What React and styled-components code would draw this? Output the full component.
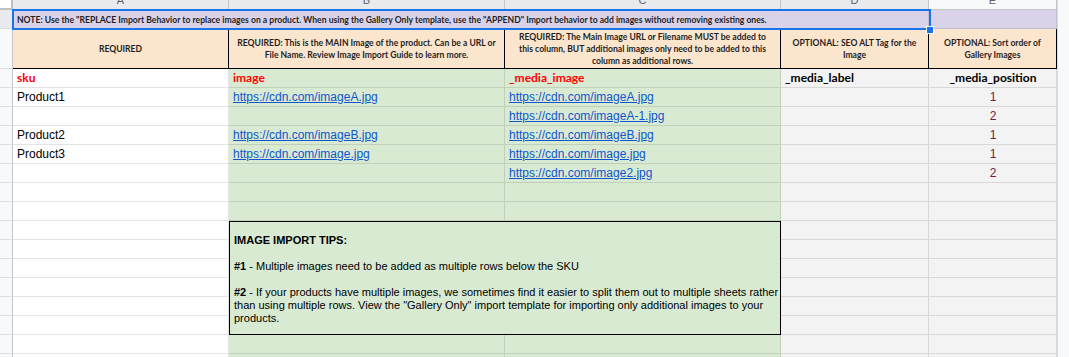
import React from "react"
import styled, { createGlobalStyle } from "styled-components"

const GlobalStyle = createGlobalStyle`
  html, body {
    margin: 0;
    padding: 0;
    background: #ffffff;
    overflow: hidden;
  }
`

const GREEN = "#d9ead3"
const GRAY = "#f3f3f3"
const ORANGE = "#fce5cd"
const LAVENDER = "#d9d2e9"
const GRID = "rgba(0, 0, 0, 0.11)"

const Sheet = styled.div`
  position: relative;
  display: grid;
  grid-template-columns: 13px 216px 276px 276px 148px 128px 12px;
  grid-template-rows: 10px 19px 40px repeat(16, 19px);
  width: 1069px;
  height: 357px;
  overflow: hidden;
  font-family: "Liberation Sans", Arial, sans-serif;
  font-size: 12px;
  color: #000;
`

const Corner = styled.div`
  background: #ffffff;
  border-right: 2px solid #bdc1c6;
  border-bottom: 2px solid #bdc1c6;
  box-sizing: border-box;
`

const ColLetter = styled.div`
  background: ${(p) => (p.$active ? "#e8eaed" : "#f8f9fa")};
  border-right: 1px solid #c4c7c5;
  border-bottom: 1px solid #c4c7c5;
  box-sizing: border-box;
  overflow: hidden;
  display: flex;
  justify-content: center;
  align-items: flex-start;
  color: #5f6368;
  font-size: 11px;
  line-height: 12px;

  span {
    margin-top: -6px;
  }
`

const RowHead = styled.div`
  background: ${(p) => (p.$active ? "#e8eaed" : "#f8f9fa")};
  border-right: 1px solid #c4c7c5;
  border-bottom: 1px solid #dadce0;
  box-sizing: border-box;
`

const Strip = styled.div`
  background: #f8f9fa;
  border-left: 1px solid #dadce0;
  box-sizing: border-box;
`

const Cell = styled.div`
  grid-column: span ${(p) => p.$span || 1};
  background: ${(p) => p.$bg || "#ffffff"};
  border-right: 1px solid ${GRID};
  border-bottom: 1px solid ${GRID};
  box-sizing: border-box;
  display: flex;
  align-items: center;
  justify-content: ${(p) => (p.$center ? "center" : "flex-start")};
  padding: 0 3px 1px 4px;
  white-space: nowrap;
  overflow: hidden;
`

const NoteCell = styled(Cell)`
  align-items: flex-end;
  padding-bottom: 3px;
  font-family: Lato, "Open Sans", sans-serif;
  font-weight: 700;
  font-size: 8.6px;
  color: #1f1f1f;
`

const HeadCell = styled.div`
  background: ${ORANGE};
  border-right: 1px solid #000;
  border-bottom: 1px solid #000;
  box-sizing: border-box;
  display: flex;
  align-items: center;
  justify-content: center;
  text-align: center;
  padding: 0 3px;
  font-family: Lato, "Open Sans", sans-serif;
  font-weight: 700;
  font-size: 8.6px;
  line-height: 12px;
  color: #1f1f1f;
  white-space: nowrap;
`

const FieldName = styled.span`
  font-family: Lato, "Open Sans", sans-serif;
  font-weight: 700;
  font-size: 12px;
  color: ${(p) => (p.$required ? "#ff0000" : "#000000")};
`

const Link = styled.a`
  color: #1155cc;
  text-decoration: underline;
`

const Position = styled.span`
  color: #741b47;
`

const Tips = styled.div`
  grid-column: 3 / 5;
  grid-row: 12 / 18;
  background: ${GREEN};
  border: 1px solid #000;
  box-sizing: border-box;
  padding: 12px 4px 0 4px;
  font-size: 11px;
  line-height: 13px;
  white-space: nowrap;
  overflow: hidden;

  p {
    margin: 0 0 13px 0;
  }
`

const Selection = styled.div`
  position: absolute;
  left: 12px;
  top: 9px;
  width: 919px;
  height: 21px;
  border: 2px solid #1a73e8;
  box-sizing: border-box;
  pointer-events: none;
`

const Handle = styled.div`
  position: absolute;
  left: 926px;
  top: 26px;
  width: 6px;
  height: 6px;
  background: #1a73e8;
  border: 1px solid #ffffff;
  box-sizing: content-box;
`

const rows = [
  { sku: "Product1", image: "https://cdn.com/imageA.jpg", media: "https://cdn.com/imageA.jpg", pos: "1" },
  { sku: "", image: "", media: "https://cdn.com/imageA-1.jpg", pos: "2" },
  { sku: "Product2", image: "https://cdn.com/imageB.jpg", media: "https://cdn.com/imageB.jpg", pos: "1" },
  { sku: "Product3", image: "https://cdn.com/image.jpg", media: "https://cdn.com/image.jpg", pos: "1" },
  { sku: "", image: "", media: "https://cdn.com/image2.jpg", pos: "2" },
  { sku: "", image: "", media: "", pos: "" },
  { sku: "", image: "", media: "", pos: "" },
]

const letters = ["A", "B", "C", "D", "E"]

const DataRow = ({ row }) => (
  <>
    <RowHead />
    <Cell>{row.sku}</Cell>
    <Cell $bg={GREEN}>{row.image && <Link href="#">{row.image}</Link>}</Cell>
    <Cell $bg={GREEN}>{row.media && <Link href="#">{row.media}</Link>}</Cell>
    <Cell $bg={GRAY} />
    <Cell $bg={GRAY} $center>
      <Position>{row.pos}</Position>
    </Cell>
    <Strip />
  </>
)

const TipRow = () => (
  <>
    <RowHead />
    <Cell />
    <Cell $bg={GRAY} />
    <Cell $bg={GRAY} />
    <Strip />
  </>
)

export default function App() {
  return (
    <>
      <GlobalStyle />
      <Sheet>
        <Corner />
        {letters.map((l, i) => (
          <ColLetter key={l} $active={i < 4}>
            <span>{l}</span>
          </ColLetter>
        ))}
        <Strip />

        <RowHead $active />
        <NoteCell $bg={LAVENDER} $span={4}>
          NOTE: Use the "REPLACE Import Behavior to replace images on a product. When using the Gallery Only template, use the "APPEND" Import behavior to add images without removing existing ones.
        </NoteCell>
        <Cell $bg={LAVENDER} />
        <Strip />

        <RowHead />
        <HeadCell>REQUIRED</HeadCell>
        <HeadCell>
          REQUIRED: This is the MAIN Image of the product. Can be a URL or
          <br />
          File Name. Review Image Import Guide to learn more.
        </HeadCell>
        <HeadCell>
          REQUIRED: The Main Image URL or Filename MUST be added to
          <br />
          this column, BUT additional images only need to be added to this
          <br />
          column as additional rows.
        </HeadCell>
        <HeadCell>
          OPTIONAL: SEO ALT Tag for the
          <br />
          Image
        </HeadCell>
        <HeadCell>
          OPTIONAL: Sort order of
          <br />
          Gallery Images
        </HeadCell>
        <Strip />

        <RowHead />
        <Cell>
          <FieldName $required>sku</FieldName>
        </Cell>
        <Cell $bg={GREEN}>
          <FieldName $required>image</FieldName>
        </Cell>
        <Cell $bg={GREEN}>
          <FieldName $required>_media_image</FieldName>
        </Cell>
        <Cell $bg={GRAY}>
          <FieldName>_media_label</FieldName>
        </Cell>
        <Cell $bg={GRAY} $center>
          <FieldName>_media_position</FieldName>
        </Cell>
        <Strip />

        {rows.map((row, i) => (
          <DataRow key={i} row={row} />
        ))}

        <Tips>
          <p>
            <b>IMAGE IMPORT TIPS:</b>
          </p>
          <p>
            <b>#1</b> - Multiple images need to be added as multiple rows below the SKU
          </p>
          <p>
            <b>#2</b> - If your products have multiple images, we sometimes find it easier to split them out to multiple sheets rather
            <br />
            than using multiple rows. View the "Gallery Only" import template for importing only additional images to your
            <br />
            products.
          </p>
        </Tips>
        {[0, 1, 2, 3, 4, 5].map((i) => (
          <TipRow key={i} />
        ))}

        <DataRow row={{ sku: "", image: "", media: "", pos: "" }} />
        <DataRow row={{ sku: "", image: "", media: "", pos: "" }} />

        <Selection />
        <Handle />
      </Sheet>
    </>
  )
}
